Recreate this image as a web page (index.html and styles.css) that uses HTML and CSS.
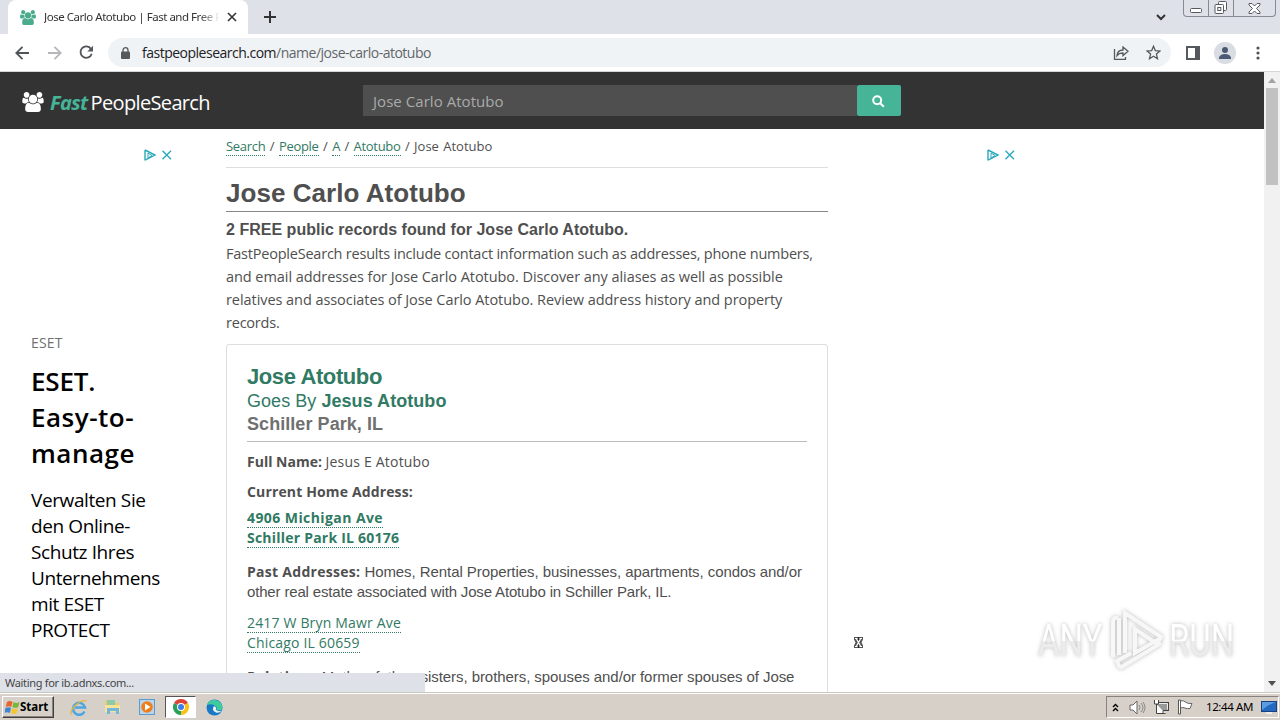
FILE: index.html
```html
<!DOCTYPE html>
<html lang="en">

<head>
    <meta charset="UTF-8">
    <meta name="viewport" content="width=device-width, initial-scale=1.0">
    <title>Jose Carlo Atotubo | Fast and Free</title>
    <link rel="stylesheet" href="styles.css">
</head>

<body>
    <svg class="defs" width="0" height="0">
        <symbol id="people" viewBox="0 0 1920 1792">
            <path d="M593 896q-162 5-265 128H194q-82 0-138-40.500T0 865q0-353 124-353 6 0 43.500 21t97.500 42.500T384 597q67 0 133-23-5 37-5 66 0 139 81 256zm1071 637q0 120-73 189.500t-194 69.500H523q-121 0-194-69.500T256 1533q0-53 3.500-103.500t14-109T300 1212t43-97.500 62-81 85.500-53.500T602 960q10 0 43 21.500t73 48 107 48T960 1099t135-21.500 107-48 73-48 43-21.500q61 0 111.500 20t85.500 53.500 62 81 43 97.500 26.500 108.500 14 109 3.500 103.500zM640 256q0 106-75 181t-181 75-181-75-75-181 75-181T384 0t181 75 75 181zm704 384q0 159-112.500 271.500T960 1024 688.500 911.500 576 640t112.500-271.500T960 256t271.500 112.500T1344 640zm576 225q0 78-56 118.500t-138 40.500h-134q-103-123-265-128 81-117 81-256 0-29-5-66 66 23 133 23 59 0 119-21.500t97.500-42.500 43.500-21q124 0 124 353zm-128-609q0 106-75 181t-181 75-181-75-75-181 75-181 181-75 181 75 75 181z" />
        </symbol>
        <symbol id="adchoices" viewBox="0 0 28 12">
            <path d="M1 1v10.500M1 1l10 5-10 5.200" />
            <path d="M4 4v5l4-2.500z" stroke-width="1" />
            <path d="M18.500 1.800l8.500 8.500M27 1.800l-8.500 8.500" />
        </symbol>
    </svg>

    <!-- Browser -->
    <div class="tab-strip">
        <div class="tab">
            <svg class="favicon" width="16" height="15"><use href="#people" /></svg>
            <span class="tab-title">Jose Carlo Atotubo | Fast and Free P</span>
            <svg class="tab-close" width="10" height="10" viewBox="0 0 10 10"><path d="M1 1l8 8M9 1L1 9" /></svg>
        </div>
        <svg class="new-tab" width="12" height="12" viewBox="0 0 12 12"><path d="M6 0v12M0 6h12" /></svg>
        <svg class="tab-search" width="10" height="7" viewBox="0 0 10 7"><path d="M1 1l4 4 4-4" /></svg>
        <div class="window-buttons">
            <div class="min"><svg width="13" height="6" viewBox="0 0 13 6"><rect x=".5" y=".5" width="11" height="4" rx="1" /></svg></div>
            <div class="max"><svg width="14" height="14" viewBox="0 0 14 14"><rect x="4.500" y=".5" width="8" height="9" rx="1" /><rect x="1" y="3.500" width="8.500" height="9" rx="1" /><rect x="3.800" y="6.500" width="3" height="3" /></svg></div>
            <div class="close"><svg width="13" height="11" viewBox="0 0 13 11"><path d="M1 .5h3l2.500 2.500L9 .5h3v1.500L8.500 5.500 12 9v1.500H9L6.500 8 4 10.500H1V9l3.500-3.500L1 2z" /></svg></div>
        </div>
    </div>
    <div class="toolbar">
        <svg class="nav-icon" width="15" height="14" viewBox="0 0 15 14"><path d="M7.500 .8L1.300 7l6.200 6.200M1.300 7H14" /></svg>
        <svg class="nav-icon disabled" width="15" height="14" viewBox="0 0 15 14"><path d="M7.500 .8L13.700 7l-6.200 6.200M13.700 7H1" /></svg>
        <svg class="nav-icon" width="15" height="15" viewBox="0 0 15 15"><path d="M12 4A5.700 5.700 0 1 0 12.700 8.800" /><path d="M14 .8v5.700H8.300z" class="solid" /></svg>
        <div class="omnibox">
            <svg class="lock" width="9" height="12" viewBox="0 0 9 12"><path d="M2 5V3.200a2.500 2.500 0 0 1 5 0V5" /><rect x="0" y="4.500" width="9" height="7.500" rx="1" /></svg>
            <span class="url"><b>fastpeoplesearch.com</b>/name/jose-carlo-atotubo</span>
            <svg class="share" width="16" height="14" viewBox="0 0 16 14"><path d="M1.500 3v10.300H12.500V11" /><path d="M4 9.500Q4.500 4 10 4V1l5 4.300-5 4.200V7Q6 6.800 4 9.500z" /></svg>
            <svg class="star" width="15" height="15" viewBox="0 0 15 15"><path d="M7.500 1.300l1.800 4.300 4.700.4-3.600 3.100 1.100 4.600-4-2.500-4 2.500 1.100-4.600L1 6l4.700-.4z" /></svg>
        </div>
        <svg class="side-panel" width="14" height="14" viewBox="0 0 14 14"><path d="M1 1h12v12H1z" /><path d="M9 0h5v14H9z" class="solid" /></svg>
        <svg class="avatar" width="22" height="22" viewBox="0 0 22 22"><circle cx="11" cy="11" r="11" fill="#d8dce3" /><circle cx="11" cy="8" r="3" /><path d="M5 17v-1.500Q6 12 11 12t6 3.500V17z" /></svg>
        <svg class="dots" width="4" height="14" viewBox="0 0 4 14"><circle cx="2" cy="2" r="1.600" /><circle cx="2" cy="7" r="1.600" /><circle cx="2" cy="12" r="1.600" /></svg>
    </div>

    <!-- Page -->
    <div class="viewport">
        <div class="page">
            <header class="site-header">
                <svg class="logo" width="22" height="20"><use href="#people" /></svg>
                <div class="brand"><em>Fast</em><span>PeopleSearch</span></div>
                <form class="search">
                    <div class="search-input">Jose Carlo Atotubo</div>
                    <div class="search-button"><svg width="13" height="13" viewBox="0 0 13 13"><circle cx="5.200" cy="5.200" r="4" /><path d="M8.200 8.200l3.600 3.600" /></svg></div>
                </form>
            </header>
            <div class="columns">
                <aside class="ad-left">
                    <svg class="adchoices" width="28" height="12"><use href="#adchoices" /></svg>
                    <div class="ad-brand">ESET</div>
                    <div class="ad-title">ESET.<br><span>Easy-to-<br>manage</span></div>
                    <div class="ad-text">Verwalten Sie<br>den Online-<br>Schutz Ihres<br>Unternehmens<br>mit ESET<br>PROTECT</div>
                </aside>
                <main>
                    <nav class="breadcrumb"><a>Search</a> / <a>People</a> / <a>A</a> / <a>Atotubo</a> / Jose Atotubo</nav>
                    <h1>Jose Carlo Atotubo</h1>
                    <h2>2 FREE public records found for Jose Carlo Atotubo.</h2>
                    <p class="intro"><span class="tight">FastPeopleSearch results include contact information such as addresses, phone numbers,</span><br>and email addresses for Jose Carlo Atotubo. Discover any aliases as well as possible<br>relatives and associates of Jose Carlo Atotubo. Review address history and property<br><span class="tight">records.</span></p>
                    <div class="card">
                        <div class="card-title">Jose Atotubo</div>
                        <div class="card-alias">Goes By <b>Jesus Atotubo</b></div>
                        <div class="card-place">Schiller Park, IL</div>
                        <div class="full-name"><b>Full Name:</b> <span>Jesus E Atotubo</span></div>
                        <div class="label">Current Home Address:</div>
                        <div class="current"><a>4906 Michigan Ave</a><br><a>Schiller Park IL 60176</a></div>
                        <p class="detail"><b>Past Addresses:</b> Homes, Rental Properties, businesses, apartments, condos and/or<br><span class="tight">other real estate associated with Jose Atotubo in Schiller Park, IL.</span></p>
                        <div class="past"><a>2417 W Bryn Mawr Ave</a><br><a>Chicago IL 60659</a></div>
                        <p class="detail"><b>Relatives:</b> Mother, father, sisters, brothers, spouses and/or former spouses of Jose</p>
                    </div>
                </main>
                <aside class="ad-right">
                    <svg class="adchoices" width="28" height="12"><use href="#adchoices" /></svg>
                </aside>
            </div>
        </div>
        <div class="scrollbar">
            <div class="arrow up"></div>
            <div class="thumb"></div>
            <div class="arrow down"></div>
        </div>
        <div class="status">Waiting for ib.adnxs.com...</div>
        <svg class="pointer" width="11" height="13" viewBox="0 0 11 13"><path d="M1 1h9v2.500L8.500 6.500 10 9.500V12H1V9.500l1.500-3L1 3.500z" fill="#555" /><path d="M3.500 3l4 7M7.500 3l-4 7" stroke="#fff" stroke-width="1.200" /><path d="M2 2.500h2.500M6.500 2.500H9M2 10.500h2.500M6.500 10.500H9" stroke="#fff" /><path d="M5.500 1v3M5.500 9v3" stroke="#222" /></svg>
        <div class="watermark">
            <span>ANY</span>
            <svg width="58" height="66" viewBox="0 0 58 66"><path d="M5 49V14q0-5 5-4M11 47V10M17 45V5l36 24-4 7-22-15v24l26-15M12 60l41-25M12 60l-3-7 14-8" /></svg>
            <span>RUN</span>
        </div>
    </div>

    <!-- Taskbar -->
    <div class="taskbar">
        <div class="start">
            <svg width="15" height="16" viewBox="0 0 15 16"><path d="M2 3q3-2 5.500 0L6.300 8Q3.500 6.500.8 8z" fill="#e8642c" /><path d="M8.500 3q3 2 6 0l-1.300 5q-3 1.700-5.700 0z" fill="#79b63c" /><path d="M.5 9Q3.500 7.500 6 9l-1.200 5Q2 12.500-.7 14z" fill="#3f86d1" /><path d="M7.200 9.200q3 1.700 5.700 0l-1.300 5q-3 1.500-5.600-.3z" fill="#f7c52d" /></svg>
            Start
        </div>
        <div class="launch">
            <svg width="18" height="17" viewBox="0 0 18 17"><path d="M14.500 12.500A6 6 0 1 1 15 8.500H5" fill="none" stroke="#4ba6e2" stroke-width="2.600" /><path d="M1.500 15.500C-1 11 10 0 16.500 2" fill="none" stroke="#e9b43a" stroke-width="1.300" /></svg>
        </div>
        <div class="launch">
            <svg width="17" height="16" viewBox="0 0 17 16"><path d="M1 2h6l1 2h7v9H1z" fill="#edcc68" /><path d="M3 1h8v5H3z" fill="#8fc9a5" /><path d="M1 6h15v7H1z" fill="#f7e399" /><path d="M3 15V9h12v6h-3v-3H6v3z" fill="#73b7df" /></svg>
        </div>
        <div class="launch">
            <svg width="16" height="16" viewBox="0 0 16 16"><rect x=".5" y=".5" width="15" height="15" fill="#b8d5ec" stroke="#5b9bd0" /><circle cx="8" cy="8" r="5.800" fill="#ef7d1a" /><path d="M6 4.500v7L11.500 8z" fill="#fff" /></svg>
        </div>
        <div class="launch active">
            <svg width="16" height="16" viewBox="0 0 16 16"><path d="M8 8L1.070 4A8 8 0 0 1 14.930 4z" fill="#dd4437" /><path d="M8 8l6.930-4A8 8 0 0 1 8 16z" fill="#fbc116" /><path d="M8 8v8A8 8 0 0 1 1.070 4z" fill="#26a05a" /><circle cx="8" cy="8" r="4" fill="#fff" /><circle cx="8" cy="8" r="3" fill="#3f7de8" /></svg>
        </div>
        <div class="launch">
            <svg width="17" height="17" viewBox="0 0 17 17"><circle cx="8.500" cy="8.500" r="8" fill="#1879c5" /><path d="M1 6C3-1 15-1 16.500 8q0 3.500-4 3.500H10q2-2 0-4Q6 4 1 6z" fill="#3ecb9e" /><path d="M8 7q3 1 2 4 2 2 6 .5-3 3-6 2Q5 11 8 7z" fill="#e8f2f3" /></svg>
        </div>
        <div class="tray">
            <svg width="7" height="9" viewBox="0 0 7 9"><path d="M1 4l2.500-2.500L6 4M1 8l2.500-2.500L6 8" fill="none" stroke="#000" stroke-width="1.400" /></svg>
            <svg class="t-sound" width="17" height="15" viewBox="0 0 17 15"><path d="M1 5h3l4-4v13l-4-4H1z" fill="#fff" stroke="#666" /><path d="M10 5q2 2.500 0 5M12 3q4 4.500 0 9M14 2q4 5.500 0 11" fill="none" stroke="#888" /></svg>
            <svg class="t-net" width="16" height="16" viewBox="0 0 16 16"><rect x="4.500" y="3.500" width="11" height="8" fill="#999" stroke="#444" /><path d="M5.500 4.500h9v6" fill="none" stroke="#eee" /><path d="M1.500 1v4h4V1M3.500 5v9.500h9M10 12v3" fill="#fff" stroke="#444" /></svg>
            <svg class="t-flag" width="17" height="16" viewBox="0 0 17 16"><path d="M1.500 1v14h2V1z" fill="#fff" stroke="#555" /><path d="M3.500 2q3-1 5 1t6.500 1.500l-2 5q-3 .5-5-.5t-4.500 0z" fill="#fff" stroke="#666" /></svg>
            <span>12:44 AM</span>
            <svg class="t-desk" width="16" height="13" viewBox="0 0 16 13"><rect x=".5" y=".5" width="15" height="10" fill="#2469c0" stroke="#17407c" /><path d="M1 1h14Q6 4 1 9z" fill="#5b9ce0" /><path d="M5 11h6v2H5z" fill="#eee" /></svg>
        </div>
    </div>
</body>

</html>
```
FILE: styles.css
```css
* {
    box-sizing: border-box;
}

body {
    margin: 0;
    width: 1280px;
    height: 720px;
    overflow: hidden;
    display: flex;
    flex-direction: column;
    font-family: "Open Sans", sans-serif;
    background: #fff;
    color: #4f4f4f;
}

svg {
    display: block;
    flex: none;
    fill: none;
}

.defs {
    position: absolute;
}

/* browser */
.tab-strip {
    flex: none;
    height: 34px;
    display: flex;
    align-items: center;
    background: #dee1e8;
}

.tab {
    display: flex;
    align-items: center;
    width: 240px;
    height: 34px;
    margin-left: 8px;
    padding: 0 11px 0 12px;
    background: #fff;
    border-radius: 8px 8px 0 0;
}

.favicon {
    fill: #4bac8d;
}

.tab-title {
    flex: 1;
    margin-left: 8px;
    overflow: hidden;
    white-space: nowrap;
    font: 11.5px/18px "Noto Sans", sans-serif;
    letter-spacing: -.47px;
    color: #333;
    -webkit-mask-image: linear-gradient(to right, #000 155px, transparent 176px);
    mask-image: linear-gradient(to right, #000 155px, transparent 176px);
}

.tab-close {
    margin-left: 8px;
    stroke: #333;
    stroke-width: 1.6;
}

.new-tab {
    margin-left: 16px;
    stroke: #333;
    stroke-width: 2;
}

.tab-search {
    margin-left: auto;
    stroke: #333;
    stroke-width: 2;
}

.window-buttons {
    display: flex;
    align-self: flex-start;
    width: 93px;
    height: 17px;
    margin: 0 4px 0 17px;
    border: 1px solid #868a93;
    border-top: 0;
    border-radius: 0 0 4px 4px;
}

.window-buttons div {
    display: flex;
    justify-content: center;
    align-items: center;
    width: 25px;
    border-right: 1px solid #868a93;
}

.window-buttons .min {
    align-items: flex-end;
    padding-bottom: 2px;
}

.window-buttons .close {
    flex: 1;
    border: 0;
}

.window-buttons svg {
    fill: #fff;
    stroke: #555962;
}

.toolbar {
    flex: none;
    display: flex;
    align-items: center;
    height: 38px;
    padding: 0 20px 0 15px;
    border-bottom: 1px solid #d4d7d9;
    background: #fff;
}

.nav-icon {
    margin-right: 17px;
    stroke: #505357;
    stroke-width: 1.8;
}

.nav-icon.disabled {
    stroke: #b5b7ba;
}

.solid {
    fill: #55585c;
    stroke: none;
}

.omnibox {
    display: flex;
    align-items: center;
    width: 1064px;
    height: 29px;
    margin-left: -3px;
    padding: 0 10px 0 13px;
    border-radius: 15px;
    background: #f0f3f5;
}

.lock {
    fill: #55585c;
}

.lock path {
    fill: none;
    stroke: #55585c;
    stroke-width: 1.3;
}

.url {
    flex: 1;
    margin-left: 12px;
    font-size: 14px;
    letter-spacing: -.5px;
    color: #62666b;
}

.url b {
    font-weight: 400;
    color: #202124;
}

.share,
.star,
.side-panel {
    stroke: #55585c;
    stroke-width: 1.3;
}

.star {
    margin-left: 17px;
}

.side-panel {
    margin-left: 15px;
    stroke-width: 2;
}

.avatar {
    margin-left: 14px;
    fill: #4c5975;
}

.dots {
    margin-left: 20px;
    fill: #505357;
}

/* page */
.viewport {
    position: relative;
    flex: none;
    height: 620px;
    display: flex;
    overflow: hidden;
}

.page {
    width: 1264px;
}

.site-header {
    display: flex;
    align-items: center;
    height: 57px;
    padding-left: 22px;
    background: #333;
}

.logo {
    margin-top: 2px;
    fill: #fff;
}

.brand {
    width: 319px;
    padding: 3px 0 0 6px;
    font-size: 20px;
    white-space: nowrap;
    color: #fff;
}

.brand em {
    font-weight: 700;
    letter-spacing: -.65px;
    color: #46b497;
}

.brand span {
    margin-left: 3px;
    letter-spacing: -.65px;
}

.search {
    display: flex;
    height: 31px;
}

.search-input {
    width: 494px;
    padding-left: 10px;
    background: #4f4f4f;
    font-size: 15px;
    letter-spacing: .05px;
    line-height: 32px;
    color: #aaa;
}

.search-button {
    display: flex;
    justify-content: center;
    align-items: center;
    width: 44px;
    padding: 2px 2px 0 0;
    border-radius: 2px;
    background: #46b497;
}

.search-button svg {
    stroke: #fff;
    stroke-width: 2;
}

.columns {
    display: flex;
}

.adchoices {
    stroke: #2ba9b9;
    stroke-width: 1.4;
}

.ad-left {
    width: 226px;
    padding: 20px 0 0 31px;
    color: #000;
}

.ad-left .adchoices {
    margin-left: 113px;
}

.ad-brand {
    margin-top: 172px;
    font-size: 14px;
    line-height: 20px;
    color: #707070;
    letter-spacing: .2px;
}

.ad-title {
    margin-top: 10px;
    font-size: 26px;
    line-height: 36px;
    font-weight: 600;
    letter-spacing: -.2px;
}

.ad-title span {
    letter-spacing: .5px;
}

.ad-text {
    margin-top: 16px;
    font-size: 19px;
    line-height: 26px;
    white-space: nowrap;
    letter-spacing: -.4px;
}

.ad-right {
    padding: 20px 0 0 159px;
}

main {
    width: 602px;
    white-space: nowrap;
}

a {
    color: #317a64;
    border-bottom: 1px dotted #317a64;
}

.breadcrumb {
    height: 39px;
    padding-top: 7px;
    border-bottom: 1px solid #ddd;
    font-size: 13px;
    line-height: 20px;
    word-spacing: 1px;
}

.breadcrumb a {
    display: inline-block;
    line-height: 17px;
    letter-spacing: -.3px;
}

h1,
h2,
.card-title,
.card-alias,
.card-place,
.detail {
    font-family: "Liberation Sans", sans-serif;
}

h1 {
    height: 44px;
    margin: 0;
    padding-top: 7px;
    border-bottom: 1px solid #888;
    font-size: 26px;
    letter-spacing: .05px;
    line-height: 37px;
}

h2 {
    margin: 6px 0 0;
    font-size: 16px;
    letter-spacing: .02px;
    line-height: 24px;
}

.intro {
    margin: 0 0 10px;
    font-size: 14.5px;
    letter-spacing: -.06px;
    line-height: 23px;
}

.tight {
    letter-spacing: -.22px;
}

.card {
    height: 400px;
    padding: 20px 20px 0;
    border: 1px solid #ddd;
    border-radius: 3px;
}

.card-title {
    font-size: 22px;
    font-weight: 700;
    letter-spacing: -.4px;
    line-height: 24px;
    color: #317a64;
}

.card-alias {
    font-size: 18px;
    letter-spacing: .05px;
    line-height: 24px;
    color: #317a64;
}

.card-place {
    height: 29px;
    border-bottom: 1px solid #bbb;
    font-size: 18px;
    font-weight: 700;
    letter-spacing: .06px;
    line-height: 23px;
    color: #707070;
}

.full-name {
    margin-top: 10px;
    font-size: 14px;
    line-height: 20px;
}

.full-name span {
    letter-spacing: .2px;
}

.label {
    margin-top: 10px;
    font-size: 14px;
    font-weight: 700;
    letter-spacing: .14px;
    line-height: 20px;
}

.current,
.past {
    font-size: 14px;
    letter-spacing: .17px;
    line-height: 20px;
}

.current {
    margin-top: 6px;
    font-weight: 700;
    letter-spacing: .22px;
}

.current a:first-child {
    letter-spacing: .42px;
}

.current a,
.past a {
    display: inline-block;
    height: 20px;
    vertical-align: top;
}

.detail {
    margin: 14px 0 0;
    font-size: 15px;
    letter-spacing: -.07px;
    line-height: 20px;
}

.detail b {
    font-family: "Open Sans", sans-serif;
    font-size: 14px;
    letter-spacing: .28px;
}

.detail .tight {
    letter-spacing: -.16px;
}

.past {
    margin-top: 11px;
}

.scrollbar {
    display: flex;
    flex-direction: column;
    align-items: center;
    width: 16px;
    background: #f1f1f1;
}

.arrow {
    border: 4px solid transparent;
}

.up {
    margin-top: 2px;
    border-bottom: 5px solid #a3a3a3;
}

.thumb {
    width: 12px;
    height: 97px;
    margin-top: 5px;
    background: #c1c1c1;
}

.down {
    margin-top: auto;
    margin-bottom: 2px;
    border-top: 5px solid #505050;
}

.status {
    position: absolute;
    left: 0;
    bottom: 0;
    width: 425px;
    height: 19px;
    padding-left: 5px;
    background: #dee1e8;
    font: 11px/19px "Noto Sans", sans-serif;
    letter-spacing: -.32px;
    color: #444;
}

.pointer {
    position: absolute;
    left: 853px;
    top: 564px;
}

.watermark {
    position: absolute;
    left: 1038px;
    top: 536px;
    display: flex;
    align-items: center;
    filter: drop-shadow(0 0 2px #bbb);
}

.watermark svg {
    stroke: #f7f7f7;
    stroke-width: 4;
}

.watermark span {
    width: 92px;
    font: 400 44px/66px "Roboto", sans-serif;
    color: transparent;
    background: linear-gradient(#fff 50%, #ececec 50%);
    -webkit-background-clip: text;
    background-clip: text;
    transform: scaleX(.75);
    transform-origin: left;
}

.watermark span:first-child {
    margin-right: -22px;
}

.watermark span:last-child {
    margin-left: 3px;
}

/* taskbar */
.taskbar {
    flex: none;
    display: flex;
    align-items: center;
    height: 28px;
    padding: 1px 1px 0 2px;
    border-top: 1px solid #c9c6bf;
    background: #d6d0c8;
    box-shadow: inset 0 1px #fff;
}

.start {
    display: flex;
    align-items: center;
    width: 52px;
    height: 22px;
    padding-left: 2px;
    border: 1px solid #fff;
    border-right-color: #404040;
    border-bottom-color: #404040;
    box-shadow: inset -1px -1px #87837c;
    font: 700 11.5px/20px "Noto Sans", sans-serif;
    color: #000;
}

.launch {
    display: flex;
    justify-content: center;
    align-items: center;
    width: 31px;
    height: 22px;
    margin-left: 3px;
}

.start + .launch {
    margin-left: 9px;
}

.active {
    border: 1px solid #555;
    border-right-color: #fff;
    border-bottom-color: #fff;
    background: #fff;
}

.tray {
    display: flex;
    align-items: center;
    width: 173px;
    height: 22px;
    margin-left: auto;
    padding-left: 5px;
    border: 1px solid #87837c;
    border-right-color: #fff;
    border-bottom-color: #fff;
    font: 11.5px/20px "Noto Sans", sans-serif;
    letter-spacing: -.4px;
    color: #000;
}

.t-sound {
    margin-left: 10px;
}

.t-net {
    margin-left: 7px;
}

.t-flag {
    margin: 0 12px 0 8px;
}

.t-desk {
    margin-left: auto;
    margin-right: 1px;
}
```
